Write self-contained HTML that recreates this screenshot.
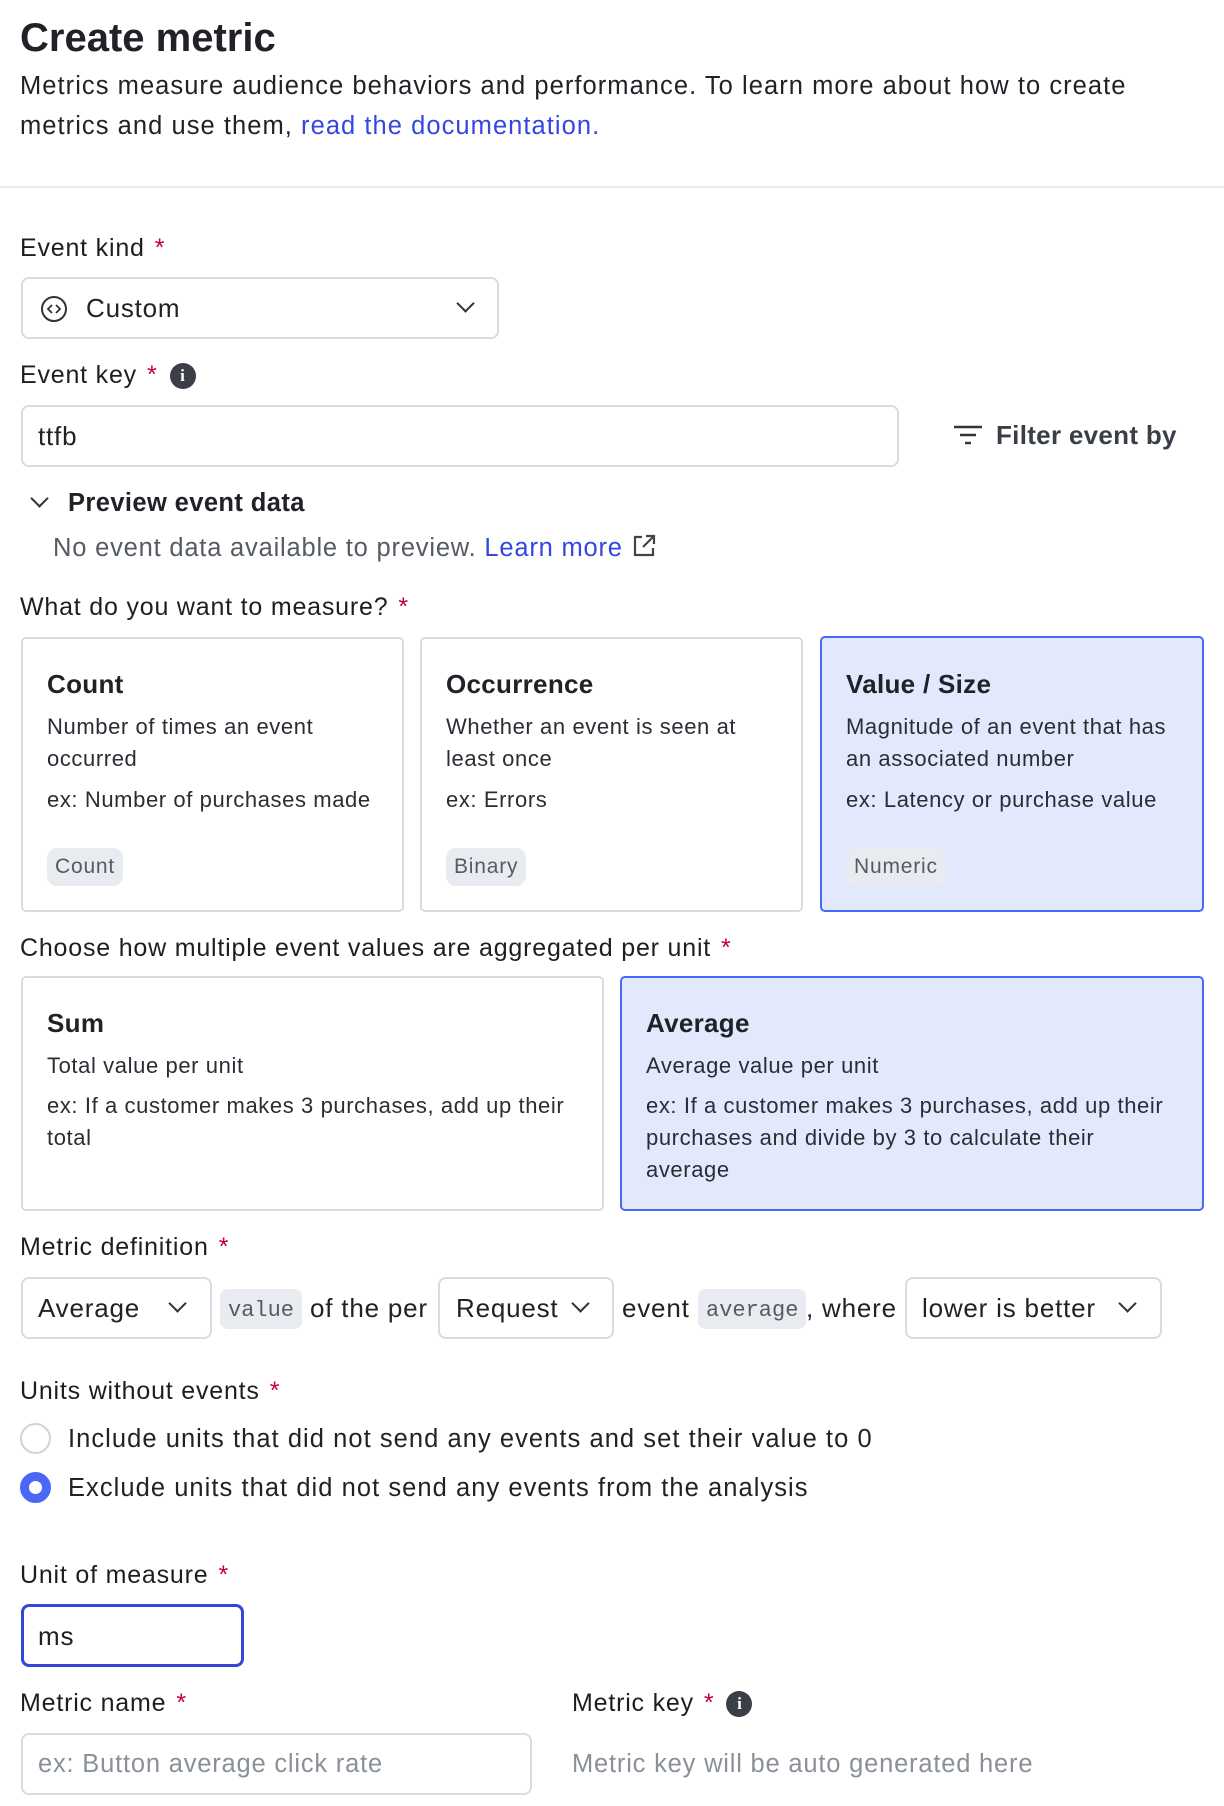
<!DOCTYPE html>
<html><head><meta charset="utf-8"><style>
*{box-sizing:border-box;margin:0;padding:0}
body{width:1224px;height:1806px;background:#fff;font-family:"Liberation Sans",sans-serif;color:#202227;position:relative;overflow:hidden;letter-spacing:0.8px}
.a{position:absolute;white-space:nowrap}
.lbl{font-size:25px;line-height:30px;color:#1c1e22}
.req{color:#c4003c;margin-left:10px}
.box{position:absolute;border:2px solid #d8dce1;border-radius:8px;background:#fff}
.card{position:absolute;border:2px solid #d8dce1;border-radius:5px;background:#fff;padding:0 24px}
.card.sel{background:#e3e9fd;border-color:#4a68f5}
.card h3{position:absolute;left:24px;font-size:26px;font-weight:bold;letter-spacing:0.3px}
.card p{position:absolute;left:24px;font-size:22px;line-height:32px;color:#2a2d33;white-space:nowrap;letter-spacing:0.6px}
.tag{position:absolute;left:24px;font-size:21px;background:#e8ecf0;color:#555b63;border-radius:10px;padding:6px 8px;line-height:26px}
.code{position:absolute;font-family:"Liberation Mono",monospace;font-size:22px;background:#e8ecf0;color:#555b63;border-radius:8px;height:40px;line-height:44px;padding:0 8px;letter-spacing:0}
.chev{position:absolute;width:13px;height:13px;border-right:2px solid #333;border-bottom:2px solid #333;transform:rotate(45deg)}
.radio{position:absolute;width:31px;height:31px;border-radius:50%;border:2px solid #d0d4da;background:#fff}
.info{display:inline-block;width:26px;height:26px;border-radius:50%;background:#3a3f47;color:#fff;font-size:17px;font-weight:bold;text-align:center;line-height:26px;vertical-align:2px;margin-left:12px;font-family:"Liberation Serif",serif;letter-spacing:0}
</style></head><body>
<div class="a" style="left:20px;top:14px;font-size:40px;font-weight:bold;line-height:48px;letter-spacing:0">Create metric</div>
<div class="a" style="left:20px;top:66px;font-size:25.5px;line-height:40px;letter-spacing:1.05px">Metrics measure audience behaviors and performance. To learn more about how to create<br>metrics and use them, <span style="color:#3347e0">read the documentation.</span></div>
<div class="a" style="left:0;top:186px;width:1224px;height:2px;background:#e6e9ed"></div>

<div class="a lbl" style="left:20px;top:233px">Event kind<span class="req">*</span></div>
<div class="box" style="left:21px;top:277px;width:478px;height:62px"></div>
<svg class="a" style="left:40px;top:295px" width="28" height="28" viewBox="0 0 28 28"><circle cx="14" cy="14" r="12" fill="none" stroke="#333" stroke-width="2"/><path d="M12 10l-4 4 4 4M16 10l4 4-4 4" fill="none" stroke="#333" stroke-width="1.8"/></svg>
<div class="a" style="left:86px;top:293px;font-size:26px;line-height:30px">Custom</div>
<div class="chev" style="left:459px;top:297px"></div>

<div class="a lbl" style="left:20px;top:360px">Event key<span class="req">*</span><span class="info">i</span></div>
<div class="box" style="left:21px;top:405px;width:878px;height:62px"></div>
<div class="a" style="left:38px;top:421px;font-size:26px;line-height:30px">ttfb</div>
<svg class="a" style="left:952px;top:424px" width="32" height="22" viewBox="0 0 32 22"><path d="M2 3h28M8 11h16M13 19h6" stroke="#333" stroke-width="2.5"/></svg>
<div class="a" style="left:996px;top:420px;font-size:26px;font-weight:bold;color:#3a3f47;line-height:30px;letter-spacing:0.3px">Filter event by</div>

<div class="chev" style="left:33px;top:492px"></div>
<div class="a" style="left:68px;top:488px;font-size:25.5px;font-weight:bold;line-height:30px;letter-spacing:0.4px">Preview event data</div>
<div class="a" style="left:53px;top:533px;font-size:25.5px;line-height:30px;color:#555b63">No event data available to preview. <span style="color:#3347e0">Learn more</span><svg style="vertical-align:-3px;margin-left:8px" width="26" height="26" viewBox="0 0 26 26"><path d="M11 4H4v18h18v-7M15 3h8v8M23 3L12 14" fill="none" stroke="#444" stroke-width="2.2"/></svg></div>

<div class="a lbl" style="left:20px;top:592px">What do you want to measure?<span class="req">*</span></div>
<div class="card" style="left:21px;top:637px;width:383px;height:275px">
<h3 style="top:30px">Count</h3><p style="top:72px">Number of times an event<br>occurred</p><p style="top:145px">ex: Number of purchases made</p><span class="tag" style="top:209px">Count</span></div>
<div class="card" style="left:420px;top:637px;width:383px;height:275px">
<h3 style="top:30px">Occurrence</h3><p style="top:72px">Whether an event is seen at<br>least once</p><p style="top:145px">ex: Errors</p><span class="tag" style="top:209px">Binary</span></div>
<div class="card sel" style="left:820px;top:636px;width:384px;height:276px">
<h3 style="top:31px">Value / Size</h3><p style="top:73px">Magnitude of an event that has<br>an associated number</p><p style="top:146px">ex: Latency or purchase value</p><span class="tag" style="top:210px">Numeric</span></div>

<div class="a lbl" style="left:20px;top:933px">Choose how multiple event values are aggregated per unit<span class="req">*</span></div>
<div class="card" style="left:21px;top:976px;width:583px;height:235px">
<h3 style="top:30px">Sum</h3><p style="top:72px">Total value per unit</p><p style="top:112px">ex: If a customer makes 3 purchases, add up their<br>total</p></div>
<div class="card sel" style="left:620px;top:976px;width:584px;height:235px">
<h3 style="top:30px">Average</h3><p style="top:72px">Average value per unit</p><p style="top:112px">ex: If a customer makes 3 purchases, add up their<br>purchases and divide by 3 to calculate their<br>average</p></div>

<div class="a lbl" style="left:20px;top:1232px">Metric definition<span class="req">*</span></div>
<div class="box" style="left:21px;top:1277px;width:191px;height:62px"></div>
<div class="a" style="left:38px;top:1293px;font-size:26px;line-height:30px">Average</div>
<div class="chev" style="left:171px;top:1297px"></div>
<div class="code" style="left:220px;top:1289px">value</div>
<div class="a" style="left:310px;top:1293px;font-size:26px;line-height:30px">of the per</div>
<div class="box" style="left:438px;top:1277px;width:176px;height:62px"></div>
<div class="a" style="left:456px;top:1293px;font-size:26px;line-height:30px">Request</div>
<div class="chev" style="left:574px;top:1297px"></div>
<div class="a" style="left:622px;top:1293px;font-size:26px;line-height:30px">event</div>
<div class="code" style="left:698px;top:1289px">average</div>
<div class="a" style="left:806px;top:1293px;font-size:26px;line-height:30px">, where</div>
<div class="box" style="left:905px;top:1277px;width:257px;height:62px"></div>
<div class="a" style="left:922px;top:1293px;font-size:26px;line-height:30px">lower is better</div>
<div class="chev" style="left:1121px;top:1297px"></div>

<div class="a lbl" style="left:20px;top:1376px">Units without events<span class="req">*</span></div>
<div class="radio" style="left:20px;top:1423px"></div>
<div class="a" style="left:68px;top:1424px;font-size:25.5px;line-height:30px;letter-spacing:1.05px">Include units that did not send any events and set their value to 0</div>
<div class="radio" style="left:20px;top:1472px;border:9px solid #4a68f5"></div>
<div class="a" style="left:68px;top:1473px;font-size:25.5px;line-height:30px;letter-spacing:1.05px">Exclude units that did not send any events from the analysis</div>

<div class="a lbl" style="left:20px;top:1560px">Unit of measure<span class="req">*</span></div>
<div class="box" style="left:21px;top:1604px;width:223px;height:63px;border:3px solid #3347d4"></div>
<div class="a" style="left:38px;top:1621px;font-size:26px;line-height:30px">ms</div>

<div class="a lbl" style="left:20px;top:1688px">Metric name<span class="req">*</span></div>
<div class="a lbl" style="left:572px;top:1688px">Metric key<span class="req">*</span><span class="info">i</span></div>
<div class="box" style="left:21px;top:1733px;width:511px;height:62px"></div>
<div class="a" style="left:38px;top:1749px;font-size:25.5px;line-height:30px;color:#8a9099">ex: Button average click rate</div>
<div class="a" style="left:572px;top:1749px;font-size:25.5px;line-height:30px;color:#8a9099">Metric key will be auto generated here</div>
</body></html>
